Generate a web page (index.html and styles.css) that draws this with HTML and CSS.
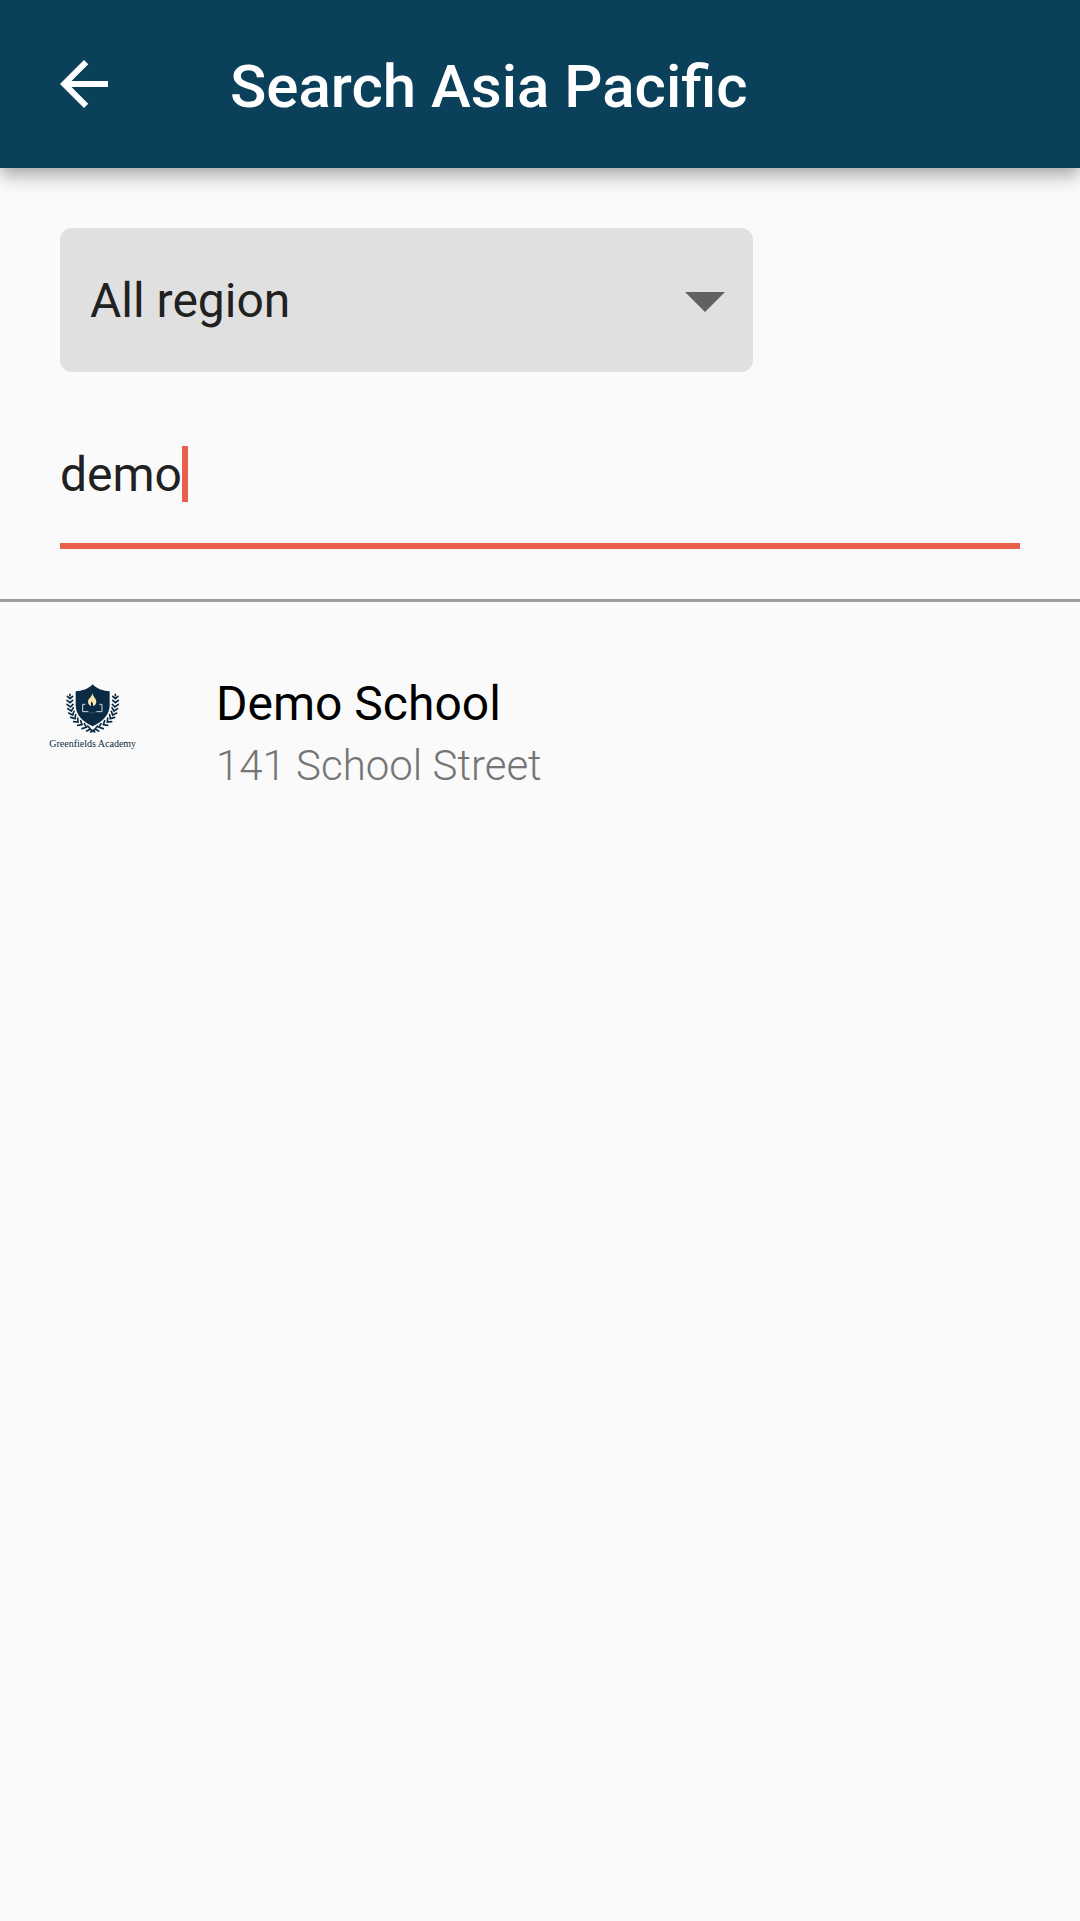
FILE: index.html
```html
<!DOCTYPE html>
<html lang="en">
<head>
<meta charset="utf-8">
<meta name="viewport" content="width=device-width, initial-scale=1">
<title>Search Asia Pacific</title>
<link rel="stylesheet" href="styles.css">
</head>
<body>
<header class="app-bar">
  <button class="back" type="button" aria-label="Back">
    <svg viewBox="0 0 24 24" aria-hidden="true"><path fill="currentColor" d="M20 11H7.83l5.59-5.59L12 4l-8 8 8 8 1.41-1.41L7.83 13H20z"/></svg>
  </button>
  <h1 class="title">Search Asia Pacific</h1>
</header>
<main>
  <form class="filters">
    <div class="region">
      <select class="region-select" aria-label="Region">
        <option>All region</option>
      </select>
      <svg class="region-arrow" viewBox="0 0 40 20" aria-hidden="true"><path fill="currentColor" d="M0 0h40L20 20z"/></svg>
    </div>
    <label class="search">
      <input class="search-input" type="text" value="demo" size="4" aria-label="Search schools">
      <span class="caret"></span>
    </label>
  </form>
  <ul class="results">
    <li>
      <a class="school" href="#demo-school">
        <svg class="logo" viewBox="24 30 270 216" role="img" aria-label="Greenfields Academy">
          <defs>
            <g id="branch" fill="none" stroke="#0b2a44" stroke-width="5" stroke-linecap="round">
              <path d="M90 73v4M82 79l8 7 8-7M81 91l9 7 8-7M81 103l10 8 8-8M83 116l11 7 6-10M86 129l12 6 4-11M92 142l13 4 2-12M101 155l13 1-1-12M113 166l13-2-4-12M126 176l13-4-6-11M140 183l11-6-8-9M150 178l14 8"/>
            </g>
          </defs>
          <use href="#branch"/>
          <use href="#branch" transform="translate(316 0) scale(-1 1)"/>
          <path fill="#0b2a44" d="M158 43c-13 14-32 20-51 21v41c0 30 22 50 51 64 29-14 51-34 51-64V64c-19-1-38-7-51-21z"/>
          <path fill="#f8e9b0" d="M157 68c2 13 12 17 12 27 0 7-5 12-10 13 1-7-1-10-4-14-2 5-4 8-1 14-6-2-10-7-10-13 0-10 13-14 13-27z"/>
          <path fill="none" stroke="#d5dde2" stroke-width="3" d="M136 103h-8v22h17M178 103h8v22h-17"/>
          <path fill="none" stroke="#3e6580" stroke-width="2" d="M145 125l13 5 12-5"/>
          <text class="logo-name" x="158" y="231" text-anchor="middle">Greenfields Academy</text>
        </svg>
        <span class="school-text">
          <span class="school-name">Demo School</span>
          <span class="school-address">141 School Street</span>
        </span>
      </a>
    </li>
  </ul>
</main>
</body>
</html>
```
FILE: styles.css
```css
* { box-sizing: border-box; }

body {
  margin: 0;
  min-height: 100vh;
  background: #fafafa;
  color: #212121;
  font-family: Roboto, sans-serif;
  font-size: 48px;
}

.app-bar {
  display: flex;
  align-items: center;
  gap: 110px;
  padding: 48px;
  background: #0b405b;
  color: #fff;
  box-shadow: 0 6px 12px -3px rgba(0, 0, 0, .2), 0 12px 15px rgba(0, 0, 0, .14), 0 3px 30px rgba(0, 0, 0, .06);
}

.back {
  flex: none;
  width: 72px;
  height: 72px;
  padding: 0;
  border: 0;
  background: none;
  color: inherit;
}

.back svg { display: block; }

.title {
  margin: 0;
  padding-top: 6px;
  font-size: 60px;
  font-weight: 500;
  line-height: 66px;
}

.filters {
  padding: 60px 60px 50px;
  border-bottom: 3px solid #9e9e9e;
}

.region {
  position: relative;
  width: 693px;
  max-width: 100%;
}

.region-select {
  display: block;
  width: 100%;
  height: 144px;
  padding: 0 90px 0 30px;
  border: 0;
  border-radius: 12px;
  appearance: none;
  background: #e0e0e0;
  color: inherit;
  font: inherit;
}

.region-arrow {
  position: absolute;
  top: 64px;
  right: 28px;
  width: 40px;
  color: #616161;
  pointer-events: none;
}

.search {
  display: flex;
  margin-top: 74px;
  padding-bottom: 41px;
  border-bottom: 6px solid #e8604c;
}

.search-input {
  field-sizing: content;
  height: 56px;
  padding: 0;
  border: 0;
  outline: 0;
  background: none;
  color: inherit;
  font: inherit;
}

.caret {
  width: 6px;
  background: #e8604c;
}

.results {
  margin: 0;
  padding: 70px 48px;
  list-style: none;
}

.school {
  display: flex;
  gap: 78px;
  color: #000;
  text-decoration: none;
}

.logo {
  flex: none;
  width: 90px;
  height: 72px;
  margin-top: 8px;
}

.logo-name {
  fill: #0b2a44;
  font-family: "Liberation Serif", serif;
  font-size: 30px;
}

.school-text {
  display: flex;
  flex-direction: column;
}

.school-name { line-height: 64px; }

.school-address {
  color: #757575;
  font-size: 42px;
  font-weight: 300;
  line-height: 60px;
}
```
